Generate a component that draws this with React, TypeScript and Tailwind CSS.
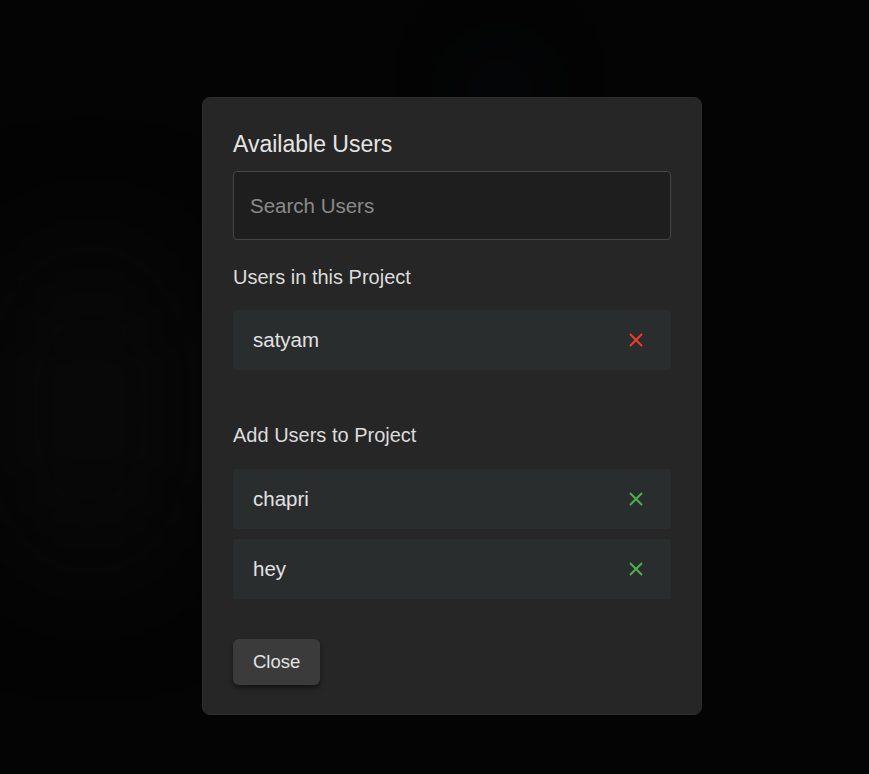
import React from 'react';

type User = { id: string; name: string };

const projectUsers: User[] = [{ id: '1', name: 'satyam' }];
const otherUsers: User[] = [
  { id: '2', name: 'chapri' },
  { id: '3', name: 'hey' },
];

// thin cross used for both remove (red) and add (green)
const Cross: React.FC<{ className: string }> = ({ className }) => (
  <svg width="16" height="16" viewBox="0 0 16 16" className={className}>
    <path d="M2 2L14 14M14 2L2 14" stroke="currentColor" strokeWidth="2" fill="none" />
  </svg>
);

const UserRow: React.FC<{ user: User; tone: 'red' | 'green' }> = ({ user, tone }) => (
  <div className="flex h-[60px] items-center justify-between rounded bg-[#2a2d2e] pl-5 pr-[27px]">
    <span className="text-[20.5px] text-[#e2e2e2]">{user.name}</span>
    <button className="flex items-center justify-center">
      <Cross className={tone === 'red' ? 'text-[#f03a2e]' : 'text-[#4caf50]'} />
    </button>
  </div>
);

export default function App() {
  return (
    <div
      className="relative flex h-[774px] w-full items-start overflow-hidden bg-[#040404] pl-[202px]"
      style={{ fontFamily: '"Liberation Sans", Arial, sans-serif' }}
    >
      {/* faint blurred backdrop of the page behind the dialog */}
      <div className="pointer-events-none absolute inset-0">
        <div className="absolute left-[30px] top-[260px] h-[300px] w-[120px] rounded-full bg-[#0b0b0b] blur-3xl" />
        <div className="absolute left-[480px] top-[70px] h-[40px] w-[40px] rounded-full bg-[#07101a] blur-2xl" />
      </div>

      <div className="relative mt-[97px] flex w-[500px] flex-col rounded-lg border border-[#2e2e2e] bg-[#262626] px-[30px] pb-[29px] pt-[31px]">
        <h2 className="text-[23px] leading-[30px] text-[#e4e4e4]">Available Users</h2>
        <input
          placeholder="Search Users"
          className="mt-3 h-[69px] w-full rounded border border-[#454545] bg-[#1e1e1e] px-4 text-[20.5px] text-[#e2e2e2] outline-none placeholder:text-[#8a8a8a]"
        />

        <h3 className="mt-6 text-[20px] leading-[27px] text-[#dcdcdc]">Users in this Project</h3>
        <div className="mt-[19px] flex flex-col gap-[10px]">
          {projectUsers.map((u) => (
            <UserRow key={u.id} user={u} tone="red" />
          ))}
        </div>

        <h3 className="mt-[52px] text-[20px] leading-[27px] text-[#dcdcdc]">Add Users to Project</h3>
        <div className="mt-5 flex flex-col gap-[10px]">
          {otherUsers.map((u) => (
            <UserRow key={u.id} user={u} tone="green" />
          ))}
        </div>

        <div className="mt-10">
          <button className="h-[46px] rounded-md bg-[#3b3b3b] px-5 text-[18.5px] text-[#e2e2e2] shadow-md shadow-black/40">
            Close
          </button>
        </div>
      </div>
    </div>
  );
}
